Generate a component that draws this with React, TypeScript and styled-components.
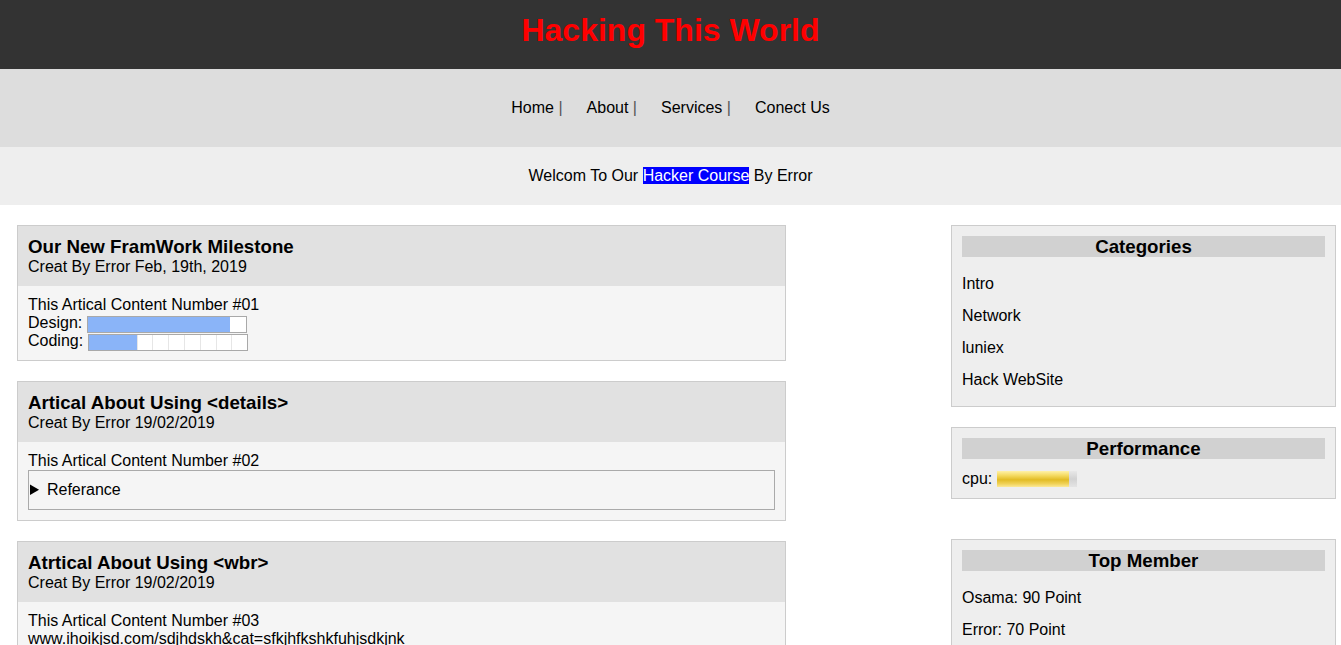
import React from "react";
import styled, { createGlobalStyle } from "styled-components";

const GlobalStyle = createGlobalStyle`
  html, body { margin: 0; padding: 0; background: #fff; }
  body {
    font-family: "Liberation Sans", Arial, sans-serif;
    font-size: 16px;
    line-height: 18px;
    color: #000;
  }
  * { box-sizing: border-box; }
`;

const Header = styled.header`
  background: #333;
  height: 69px;
  padding-top: 12px;
  text-align: center;
`;

const Title = styled.h1`
  margin: 0;
  color: #f00;
  font-size: 32px;
  line-height: 37px;
  font-weight: bold;
`;

const Nav = styled.nav`
  background: #ddd;
  height: 78px;
  padding-top: 30px;
  display: flex;
  justify-content: center;
`;

const NavItem = styled.span`
  margin: 0 12px;
  color: #000;
  white-space: pre;
`;

const Sep = styled.span`
  color: #555;
`;

const Welcome = styled.div`
  background: #eee;
  height: 58px;
  padding-top: 20px;
  text-align: center;
  white-space: pre;
`;

const Highlight = styled.span`
  background: #00f;
  color: #fff;
`;

const Main = styled.main`
  display: flex;
  justify-content: space-between;
  align-items: flex-start;
  padding: 20px 5px 0 17px;
`;

const Articles = styled.div`
  width: 769px;
  display: flex;
  flex-direction: column;
  gap: 20px;
`;

const Article = styled.article`
  border: 1px solid #ccc;
  background: #f5f5f5;
`;

const ArticleHead = styled.div`
  background: #e1e1e1;
  padding: 11px 10px 0;
  height: 60px;
`;

const ArticleTitle = styled.h2`
  margin: 0;
  font-size: 18.72px;
  line-height: 20px;
  font-weight: bold;
`;

const ArticleMeta = styled.div`
  line-height: 19px;
`;

const ArticleBody = styled.div`
  padding: 10px;
`;

const Line = styled.div`
  height: 18px;
  white-space: nowrap;
`;

const BarRow = styled.div`
  height: 18px;
  display: flex;
  align-items: flex-start;
`;

const BarLabel = styled.span`
  margin-right: 5px;
`;

const Track = styled.div`
  margin-top: 2px;
  width: 160px;
  height: 17px;
  border: 1px solid #a9a9a9;
  background: #fff;
  display: flex;
  overflow: hidden;
`;

const Fill = styled.div`
  height: 100%;
  background: #8ab4f8;
`;

const Segments = styled.div`
  flex: 1;
  display: flex;
`;

const Segment = styled.div`
  flex: 1;
  border-left: 1px solid #e6e6e6;
`;

const Details = styled.details`
  border: 1px solid #aaa;
  padding: 10px 1px;
  background: #f5f5f5;
`;

const Summary = styled.summary`
  cursor: pointer;
  line-height: 18px;
`;

const Sidebar = styled.aside`
  width: 385px;
  display: flex;
  flex-direction: column;
`;

const Box = styled.section<{ $gap?: number }>`
  background: #eee;
  border: 1px solid #ccc;
  padding: 10px;
  margin-top: ${(p) => p.$gap ?? 0}px;
`;

const BoxTitle = styled.h3`
  margin: 0;
  background: #d1d1d1;
  text-align: center;
  font-size: 18.72px;
  line-height: 22px;
  height: 21px;
  font-weight: bold;
`;

const List = styled.ul`
  list-style: none;
  margin: 11px 0 0;
  padding: 0;
`;

const ListItem = styled.li`
  padding: 7px 0;
  line-height: 18px;
`;

const CpuRow = styled.div`
  margin-top: 11px;
  height: 18px;
  display: flex;
  align-items: center;
  gap: 5px;
`;

const Cpu = styled.div`
  width: 80px;
  height: 16px;
  display: flex;
  background: linear-gradient(#e8e8e8, #d2d2d2 50%, #e4e4e4);
`;

const CpuFill = styled.div`
  height: 100%;
  background: linear-gradient(#fff2a8 0%, #f3d85c 30%, #e2bc25 55%, #f0d258 80%, #fbe998 100%);
`;

export default function App() {
  const navItems = ["Home", "About", "Services", "Conect Us"];
  return (
    <>
      <GlobalStyle />
      <Header>
        <Title>Hacking This World</Title>
      </Header>
      <Nav>
        {navItems.map((n, i) => (
          <NavItem key={n}>
            {n}
            {i < navItems.length - 1 && <Sep> |</Sep>}
          </NavItem>
        ))}
      </Nav>
      <Welcome>
        Welcom To Our <Highlight>Hacker Course</Highlight> By Error
      </Welcome>
      <Main>
        <Articles>
          <Article>
            <ArticleHead>
              <ArticleTitle>Our New FramWork Milestone</ArticleTitle>
              <ArticleMeta>Creat By Error Feb, 19th, 2019</ArticleMeta>
            </ArticleHead>
            <ArticleBody>
              <Line>This Artical Content Number #01</Line>
              <BarRow>
                <BarLabel>Design:</BarLabel>
                <Track>
                  <Fill style={{ width: "90%" }} />
                </Track>
              </BarRow>
              <BarRow>
                <BarLabel>Coding:</BarLabel>
                <Track>
                  <Fill style={{ width: "30%" }} />
                  <Segments>
                    {Array.from({ length: 7 }).map((_, i) => (
                      <Segment key={i} />
                    ))}
                  </Segments>
                </Track>
              </BarRow>
            </ArticleBody>
          </Article>
          <Article>
            <ArticleHead>
              <ArticleTitle>Artical About Using &lt;details&gt;</ArticleTitle>
              <ArticleMeta>Creat By Error 19/02/2019</ArticleMeta>
            </ArticleHead>
            <ArticleBody>
              <Line>This Artical Content Number #02</Line>
              <Details>
                <Summary>Referance</Summary>
              </Details>
            </ArticleBody>
          </Article>
          <Article>
            <ArticleHead>
              <ArticleTitle>Atrtical About Using &lt;wbr&gt;</ArticleTitle>
              <ArticleMeta>Creat By Error 19/02/2019</ArticleMeta>
            </ArticleHead>
            <ArticleBody>
              <Line>This Artical Content Number #03</Line>
              <Line>www.ihoikjsd.com/sdjhdskh&amp;cat=sfkjhfkshkfuhjsdkjnk</Line>
            </ArticleBody>
          </Article>
        </Articles>
        <Sidebar>
          <Box>
            <BoxTitle>Categories</BoxTitle>
            <List>
              {["Intro", "Network", "luniex", "Hack WebSite"].map((c) => (
                <ListItem key={c}>{c}</ListItem>
              ))}
            </List>
          </Box>
          <Box $gap={20}>
            <BoxTitle>Performance</BoxTitle>
            <CpuRow>
              cpu:
              <Cpu>
                <CpuFill style={{ width: "90%" }} />
              </Cpu>
            </CpuRow>
          </Box>
          <Box $gap={40}>
            <BoxTitle>Top Member</BoxTitle>
            <List>
              {["Osama: 90 Point", "Error: 70 Point"].map((c) => (
                <ListItem key={c}>{c}</ListItem>
              ))}
            </List>
          </Box>
        </Sidebar>
      </Main>
    </>
  );
}
